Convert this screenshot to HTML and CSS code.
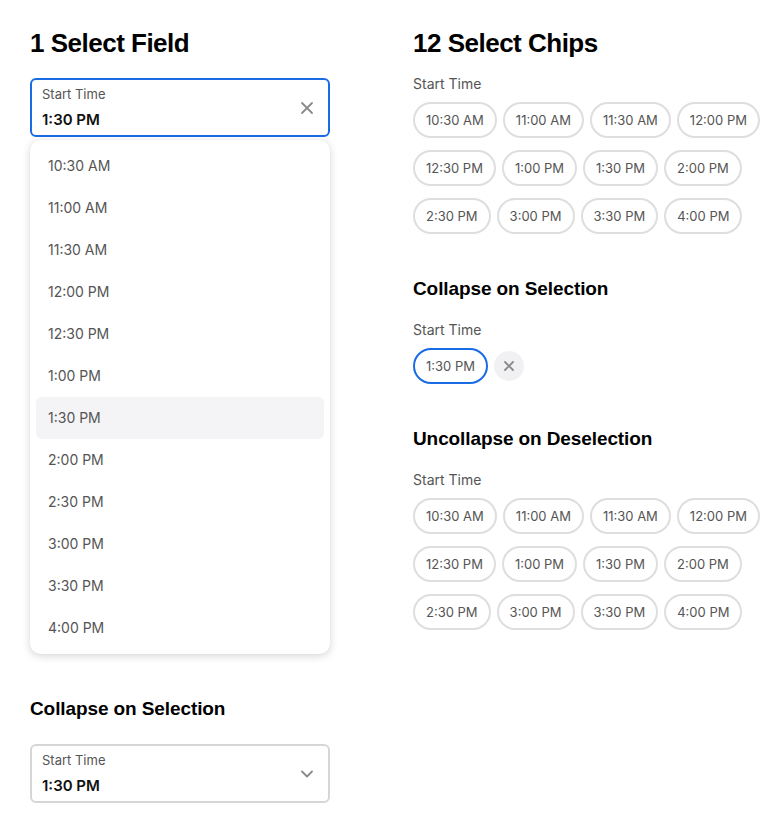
FILE: index.html
```html
<!DOCTYPE html>
<html>
<head>
<meta charset="utf-8">
<link rel="stylesheet" href="styles.css">
</head>
<body>
<div class="page">
  <div class="col">
    <h1 class="title">1 Select Field</h1>
    <div class="field field-active">
      <div class="field-text">
        <div class="field-label">Start Time</div>
        <div class="field-value">1:30 PM</div>
      </div>
      <svg class="field-icon" width="14" height="14" viewBox="0 0 14 14"><path d="M2 2 L12 12 M12 2 L2 12" stroke="#8a8a8a" stroke-width="1.8" stroke-linecap="round"/></svg>
    </div>
    <ul class="menu">
      <li class="menu-item">10:30 AM</li>
      <li class="menu-item">11:00 AM</li>
      <li class="menu-item">11:30 AM</li>
      <li class="menu-item">12:00 PM</li>
      <li class="menu-item">12:30 PM</li>
      <li class="menu-item">1:00 PM</li>
      <li class="menu-item menu-item-hover">1:30 PM</li>
      <li class="menu-item">2:00 PM</li>
      <li class="menu-item">2:30 PM</li>
      <li class="menu-item">3:00 PM</li>
      <li class="menu-item">3:30 PM</li>
      <li class="menu-item">4:00 PM</li>
    </ul>
    <h2 class="subtitle sub-left">Collapse on Selection</h2>
    <div class="field">
      <div class="field-text">
        <div class="field-label">Start Time</div>
        <div class="field-value">1:30 PM</div>
      </div>
      <svg class="field-icon" width="14" height="10" viewBox="0 0 14 10"><path d="M2 2.5 L7 7.5 L12 2.5" fill="none" stroke="#8a8a8a" stroke-width="1.8" stroke-linecap="round" stroke-linejoin="round"/></svg>
    </div>
  </div>

  <div class="col">
    <h1 class="title">12 Select Chips</h1>
    <div class="chip-label first-label">Start Time</div>
    <div class="chips">
      <span class="chip">10:30 AM</span><span class="chip">11:00 AM</span><span class="chip">11:30 AM</span><span class="chip">12:00 PM</span>
      <span class="chip">12:30 PM</span><span class="chip">1:00 PM</span><span class="chip">1:30 PM</span><span class="chip">2:00 PM</span>
      <span class="chip">2:30 PM</span><span class="chip">3:00 PM</span><span class="chip">3:30 PM</span><span class="chip">4:00 PM</span>
    </div>

    <h2 class="subtitle">Collapse on Selection</h2>
    <div class="chip-label">Start Time</div>
    <div class="chips">
      <span class="chip chip-selected">1:30 PM</span>
      <span class="chip-clear"><svg width="12" height="12" viewBox="0 0 12 12"><path d="M2 2 L10 10 M10 2 L2 10" stroke="#8a8a8a" stroke-width="1.8" stroke-linecap="round"/></svg></span>
    </div>

    <h2 class="subtitle">Uncollapse on Deselection</h2>
    <div class="chip-label">Start Time</div>
    <div class="chips">
      <span class="chip">10:30 AM</span><span class="chip">11:00 AM</span><span class="chip">11:30 AM</span><span class="chip">12:00 PM</span>
      <span class="chip">12:30 PM</span><span class="chip">1:00 PM</span><span class="chip">1:30 PM</span><span class="chip">2:00 PM</span>
      <span class="chip">2:30 PM</span><span class="chip">3:00 PM</span><span class="chip">3:30 PM</span><span class="chip">4:00 PM</span>
    </div>
  </div>
</div>
</body>
</html>
```

FILE: styles.css
```css
* { box-sizing: border-box; }
html, body { margin: 0; padding: 0; background: #fff; }
body {
  font-family: Inter, "Liberation Sans", Arial, sans-serif;
  color: #111;
}
.page {
  display: grid;
  grid-template-columns: 300px 360px;
  column-gap: 83px;
  padding: 27px 0 0 30px;
}
.col { display: flex; flex-direction: column; align-items: flex-start; }
.title {
  margin: 0;
  font-family: "Liberation Sans", Arial, sans-serif;
  font-weight: 700;
  font-size: 26px;
  line-height: 32px;
  letter-spacing: -0.5px;
  color: #000;
}
.subtitle {
  margin: 43px 0 0 0;
  font-family: "Liberation Sans", Arial, sans-serif;
  font-weight: 700;
  font-size: 19px;
  line-height: 24px;
  letter-spacing: -0.1px;
  color: #000;
}
.sub-left { margin-top: 43px; margin-bottom: 23px; }

.field {
  width: 300px;
  height: 59px;
  border: 2px solid #d6d6d6;
  border-radius: 6px;
  display: flex;
  align-items: center;
  justify-content: space-between;
  padding: 0 14px 0 10px;
}
.field-active { border-color: #1a6be6; margin-top: 19px; }
.field-text { display: flex; flex-direction: column; align-self: stretch; padding-top: 6px; }
.field-label { font-size: 13px; line-height: 16px; color: #555; }
.field-value { font-size: 15px; line-height: 20px; margin-top: 8px; font-weight: 600; color: #111; }
.field-icon { display: block; }

.menu {
  list-style: none;
  margin: 3px 0 0 0;
  padding: 5px 6px 5px 6px;
  width: 300px;
  background: #fff;
  border-radius: 10px;
  box-shadow: 0 2px 8px rgba(0,0,0,0.16), 0 0 1px rgba(0,0,0,0.12);
}
.menu-item {
  height: 42px;
  line-height: 42px;
  padding-left: 12px;
  font-size: 14px;
  color: #555;
  border-radius: 6px;
}
.menu-item-hover { background: #f4f4f6; }

.chip-label {
  margin-top: 19px;
  font-size: 14px;
  line-height: 20px;
  color: #555;
}
.first-label { margin-top: 15px; }
.chips {
  margin-top: 8px;
  display: flex;
  flex-wrap: wrap;
  column-gap: 6px;
  row-gap: 12px;
  width: 360px;
  align-items: center;
}
.chip {
  height: 36px;
  padding: 0 11px;
  border: 2px solid #dedede;
  border-radius: 18px;
  display: inline-flex;
  align-items: center;
  font-size: 13px;
  color: #555;
  white-space: nowrap;
}
.chip-selected { border-color: #1a6be6; }
.chip-clear {
  width: 30px;
  height: 30px;
  border-radius: 50%;
  background: #f1f1f3;
  display: inline-flex;
  align-items: center;
  justify-content: center;
}
```
